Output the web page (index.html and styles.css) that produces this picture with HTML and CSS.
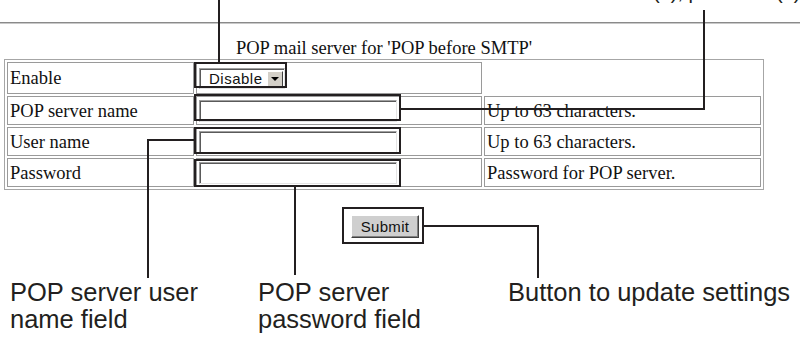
FILE: index.html
```html
<!DOCTYPE html>
<html>
<head lang="en">
    <meta charset="UTF-8">
    <title>POP before SMTP</title>
    <link rel="stylesheet" href="styles.css">
</head>
<body>
<div id="page">
    <svg class="marks" width="800" height="341" viewBox="0 0 800 341">
        <text class="cut" x="653" y="-1">(1), p</text>
        <text class="cut" x="776" y="-1">(2)</text>
        <g class="lines">
            <path d="M219 0 V62"/>
            <path d="M401 108.5 H704 V10"/>
            <path d="M194 140 H148 V278"/>
            <path d="M295 187 V275"/>
            <path d="M424 226 H538 V278"/>
            <rect x="195" y="63" width="91" height="24"/>
            <rect x="195" y="95" width="205" height="25"/>
            <rect x="195" y="128" width="205" height="25"/>
            <rect x="195" y="160" width="205" height="26"/>
            <rect x="343" y="208" width="80" height="35"/>
        </g>
    </svg>

    <div class="rule"></div>

    <table class="settings">
        <caption>POP mail server for 'POP before SMTP'</caption>
        <tr class="first">
            <td class="label">Enable</td>
            <td class="field">
                <span class="select"><span class="value">Disable</span><span class="arrow"></span></span>
            </td>
            <td class="note"></td>
        </tr>
        <tr>
            <td class="label">POP server name</td>
            <td class="field"><input class="text" type="text"></td>
            <td class="note">Up to 63 characters.</td>
        </tr>
        <tr>
            <td class="label">User name</td>
            <td class="field"><input class="text" type="text"></td>
            <td class="note">Up to 63 characters.</td>
        </tr>
        <tr>
            <td class="label">Password</td>
            <td class="field"><input class="text" type="password"></td>
            <td class="note">Password for POP server.</td>
        </tr>
    </table>

    <div class="actions">
        <button class="submit" type="button">Submit</button>
    </div>

    <div class="labels">
        <p class="user">POP server user<br>name field</p>
        <p class="pass">POP server<br>password field</p>
        <p class="send">Button to update settings</p>
    </div>
</div>
</body>
</html>
```

FILE: styles.css
```css
* {
    padding: 0;
    margin: 0;
}

body {
    width: 800px;
    height: 341px;
    overflow: hidden;
    background: #ffffff;
    color: #111111;
    font-family: "Liberation Serif", serif;
}

#page {
    display: flow-root;
    position: relative;
    width: 800px;
    height: 341px;
    overflow: hidden;
}

.marks {
    position: absolute;
    left: 0;
    top: 0;
    pointer-events: none;
    z-index: 5;
}

.marks .lines path,
.marks .lines rect {
    fill: none;
    stroke: #231f20;
    stroke-width: 2;
    shape-rendering: crispEdges;
}

.marks .cut {
    font-family: "Liberation Sans", sans-serif;
    font-size: 20px;
    fill: #231f20;
}

.rule {
    margin-top: 22px;
    height: 1px;
    background: #8a8a8a;
    border-bottom: 1px solid #c8c8c8;
}

.settings {
    margin: 14px 0 0 4px;
    width: 760px;
    table-layout: fixed;
    border-collapse: separate;
    border-spacing: 2px;
    border: 1px solid #a6a6a6;
    empty-cells: hide;
    font-size: 18.5px;
}

.settings caption {
    line-height: 21px;
    text-align: center;
}

.settings td {
    box-sizing: border-box;
    height: 29px;
    border: 1px solid #9a9a9a;
    padding: 0 2px;
    line-height: 20px;
    vertical-align: middle;
    white-space: nowrap;
}

.settings .first td {
    height: 32px;
}

.settings .label {
    width: 187px;
}

.settings .field {
    width: 286px;
    padding-left: 2px;
}

.settings .note {
    width: 277px;
}

.text {
    display: block;
    box-sizing: border-box;
    width: 198px;
    height: 22px;
    border: 1px solid;
    border-color: #a0a0a0 #e4e4e4 #e4e4e4 #a0a0a0;
    box-shadow: inset 1px 1px 0 #5a5a5a;
    background: #ffffff;
    outline: none;
}

.select {
    display: flex;
    align-items: center;
    box-sizing: border-box;
    width: 86px;
    height: 21px;
    border: 1px solid;
    border-color: #a0a0a0 #e4e4e4 #e4e4e4 #a0a0a0;
    box-shadow: inset 1px 1px 0 #5a5a5a;
    background: #ffffff;
    font-family: "Liberation Sans", sans-serif;
    font-size: 15px;
    letter-spacing: 0.5px;
    line-height: 17px;
}

.select .value {
    flex: 1;
    padding-left: 9px;
}

.select .arrow {
    display: flex;
    align-items: center;
    justify-content: center;
    box-sizing: border-box;
    width: 16px;
    height: 16px;
    margin: 1px 1px 0 0;
    border: 1px solid;
    border-color: #ffffff #404040 #404040 #ffffff;
    background: #d4d0c8;
}

.select .arrow:before {
    content: "";
    border-left: 4px solid transparent;
    border-right: 4px solid transparent;
    border-top: 4px solid #000000;
}

.actions {
    display: flex;
    justify-content: center;
    width: 760px;
    margin: 25px 0 0 5px;
}

.submit {
    box-sizing: border-box;
    width: 68px;
    height: 23px;
    border: 1px solid;
    border-color: #ffffff #404040 #404040 #ffffff;
    box-shadow: inset -1px -1px 0 #808080;
    background: #cfcfcf;
    color: #111111;
    font-family: "Liberation Sans", sans-serif;
    font-size: 15px;
    letter-spacing: 0.3px;
}

.labels {
    display: flex;
    margin-top: 41px;
    color: #231f20;
    font-family: "Liberation Sans", sans-serif;
    font-size: 25.5px;
    line-height: 27px;
}

.labels .user {
    width: 248px;
    margin-left: 10px;
}

.labels .pass {
    width: 250px;
}

.labels .send {
    white-space: nowrap;
}
```
